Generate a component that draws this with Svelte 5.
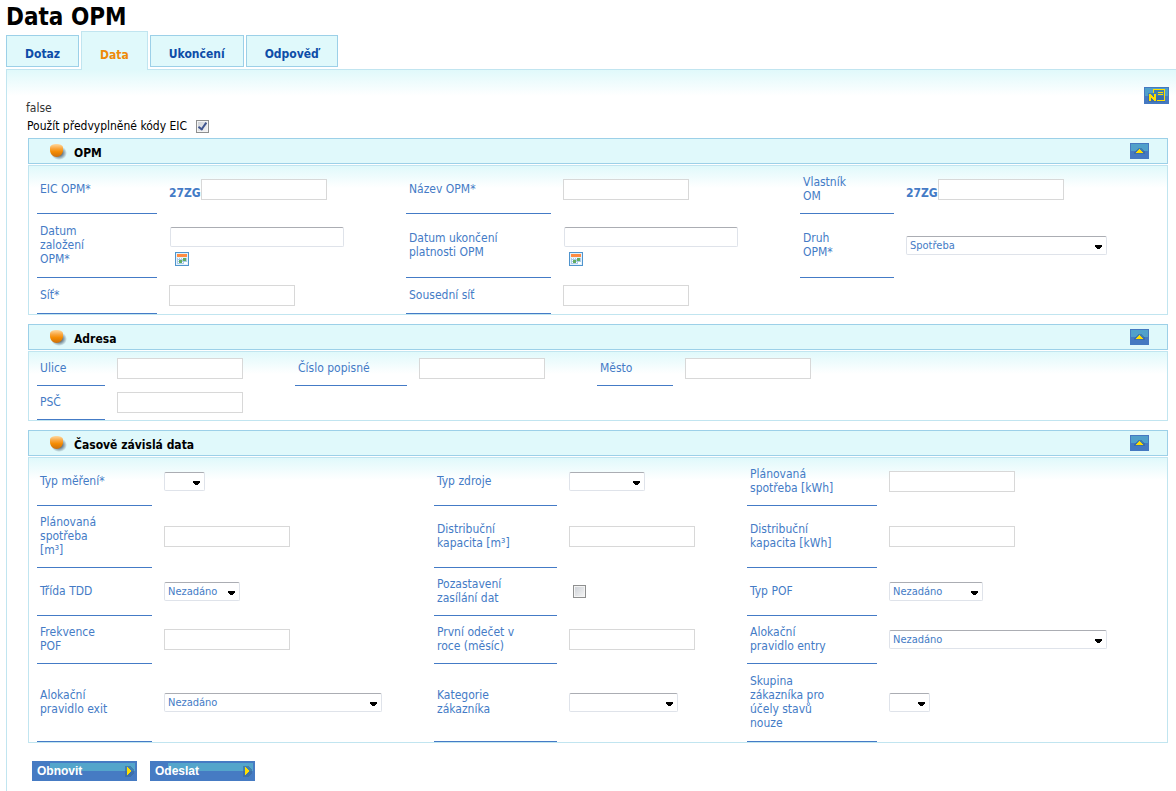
<script lang="ts">
	type Field = {
		id: string;
		label: string;
		type: 'text' | 'date' | 'select' | 'checkbox';
		prefix?: string;
		value?: string;
		size?: string;
	};

	type Section = {
		id: string;
		title: string;
		open: boolean;
		fields: Field[];
	};

	const tabs = ['Dotaz', 'Data', 'Ukončení', 'Odpověď'];
	let activeTab = $state('Data');
	let prefillEic = $state(true);

	let sections = $state<Section[]>([
		{
			id: 'opm',
			title: 'OPM',
			open: true,
			fields: [
				{ id: 'eic', label: 'EIC OPM*', type: 'text', prefix: '27ZG' },
				{ id: 'nazev', label: 'Název OPM*', type: 'text' },
				{ id: 'vlastnik', label: 'Vlastník\nOM', type: 'text', prefix: '27ZG' },
				{ id: 'zalozeni', label: 'Datum\nzaložení\nOPM*', type: 'date' },
				{ id: 'ukonceni', label: 'Datum ukončení\nplatnosti OPM', type: 'date' },
				{ id: 'druh', label: 'Druh\nOPM*', type: 'select', value: 'Spotřeba', size: 'lg' },
				{ id: 'sit', label: 'Síť*', type: 'text' },
				{ id: 'sousedni', label: 'Sousední síť', type: 'text' }
			]
		},
		{
			id: 'adresa',
			title: 'Adresa',
			open: true,
			fields: [
				{ id: 'ulice', label: 'Ulice', type: 'text' },
				{ id: 'cislo', label: 'Číslo popisné', type: 'text' },
				{ id: 'mesto', label: 'Město', type: 'text' },
				{ id: 'psc', label: 'PSČ', type: 'text' }
			]
		},
		{
			id: 'casova',
			title: 'Časově závislá data',
			open: true,
			fields: [
				{ id: 'mereni', label: 'Typ měření*', type: 'select', value: '', size: 'xs' },
				{ id: 'zdroj', label: 'Typ zdroje', type: 'select', value: '', size: 'sm' },
				{ id: 'spotreba-kwh', label: 'Plánovaná\nspotřeba [kWh]', type: 'text' },
				{ id: 'spotreba-m3', label: 'Plánovaná\nspotřeba\n[m³]', type: 'text' },
				{ id: 'kapacita-m3', label: 'Distribuční\nkapacita [m³]', type: 'text' },
				{ id: 'kapacita-kwh', label: 'Distribuční\nkapacita [kWh]', type: 'text' },
				{ id: 'tdd', label: 'Třída TDD', type: 'select', value: 'Nezadáno', size: 'sm' },
				{ id: 'pozastaveni', label: 'Pozastavení\nzasílání dat', type: 'checkbox' },
				{ id: 'pof', label: 'Typ POF', type: 'select', value: 'Nezadáno', size: 'md' },
				{ id: 'frekvence', label: 'Frekvence\nPOF', type: 'text' },
				{ id: 'odecet', label: 'První odečet v\nroce (měsíc)', type: 'text' },
				{ id: 'entry', label: 'Alokační\npravidlo entry', type: 'select', value: 'Nezadáno', size: 'xl' },
				{ id: 'exit', label: 'Alokační\npravidlo exit', type: 'select', value: 'Nezadáno', size: 'xl' },
				{ id: 'kategorie', label: 'Kategorie\nzákazníka', type: 'select', value: '', size: 'ml' },
				{ id: 'skupina', label: 'Skupina\nzákazníka pro\núčely stavů\nnouze', type: 'select', value: '', size: 'xs' }
			]
		}
	]);
</script>

<div class="page">
	<h1>Data OPM</h1>

	<div class="tabs" role="tablist">
		{#each tabs as tab}
			<button
				type="button"
				class="tab"
				class:active={tab === activeTab}
				role="tab"
				aria-selected={tab === activeTab}
				onclick={() => (activeTab = tab)}>{tab}</button
			>
		{/each}
	</div>

	<form class="panel" onsubmit={(e) => e.preventDefault()}>
		<div class="toolbar">
			<button class="note-btn" type="button" aria-label="Poznámka">
				<svg width="25" height="17" viewBox="0 0 25 17" shape-rendering="crispEdges">
					<rect width="25" height="17" fill="#4579c1" />
					<rect x="1" y="1" width="23" height="8" fill="#50a0ca" />
					<path d="M4 6h9v9H4zM9 2h12v13H9z" fill="#37679b" opacity=".6" />
					<path d="M9 2h12v12h-8v-1h7V3H10v3H9z" fill="#ffde00" />
					<path d="M14 5h5v1h-5zM14 7h5v1h-5z" fill="#ffde00" />
					<path d="M5 7h2v1h1v1h1v1h1V7h2v7h-2v-1H9v-1H8v-1H7v3H5z" fill="#ffde00" />
				</svg>
			</button>
		</div>

		<div class="intro">
			<span class="flag">false</span>
			<div class="prefill">
				<label for="prefill">Použít předvyplněné kódy EIC</label>
				<input id="prefill" type="checkbox" bind:checked={prefillEic} />
			</div>
		</div>

		{#each sections as section (section.id)}
			<section>
				<header>
					<svg class="ball" width="19" height="17" viewBox="0 0 19 17">
						<defs>
							<linearGradient id="ball-{section.id}" x2="0" y2="1">
								<stop offset="0" stop-color="#ffd9a0" />
								<stop offset=".35" stop-color="#f9a53c" />
								<stop offset=".6" stop-color="#f58b00" />
								<stop offset="1" stop-color="#c97010" />
							</linearGradient>
							<radialGradient id="shade-{section.id}">
								<stop offset=".4" stop-color="#456" stop-opacity=".8" />
								<stop offset="1" stop-color="#456" stop-opacity="0" />
							</radialGradient>
						</defs>
						<ellipse cx="10" cy="10" rx="8" ry="7" fill="url(#shade-{section.id})" />
						<path
							d="M1 5c0-3 3-4 6.500-4S14 2 14 5v2c0 4-3 7-6.500 7S1 11 1 7z"
							fill="url(#ball-{section.id})"
						/>
					</svg>
					<h2>{section.title}</h2>
					<button
						class="collapse"
						type="button"
						aria-label="Sbalit {section.title}"
						aria-expanded={section.open}
						onclick={() => (section.open = !section.open)}
					>
						<svg width="19" height="16" viewBox="0 0 19 16" shape-rendering="crispEdges">
							<rect width="19" height="16" fill="#4579c1" />
							<rect x="1" y="1" width="17" height="7" fill="#50a0ca" />
							<path d="M4 11V9l4-4h3l4 4v2z" fill="#37679b" opacity=".6" />
							<path d="M9 6h1v1h1v1h1v1h1v1H6V9h1V8h1V7h1z" fill="#ffde00" />
						</svg>
					</button>
				</header>
				{#if section.open}
					<div class="fields {section.id}">
						{#each section.fields as field (field.id)}
							<label class="name" for={field.id}>{field.label}</label>
							<div class="control" class:date={field.type === 'date'}>
								{#if field.prefix}
									<span class="prefix">{field.prefix}</span>
								{/if}
								{#if field.type === 'select'}
									<select id={field.id} class={field.size} value={field.value}>
										<option value={field.value}>{field.value}</option>
									</select>
								{:else if field.type === 'checkbox'}
									<input id={field.id} class="lone" type="checkbox" />
								{:else}
									<input id={field.id} type="text" />
								{/if}
								{#if field.type === 'date'}
									<button class="calendar" type="button" aria-label="Vybrat datum">
										<svg width="14" height="14" viewBox="0 0 14 14" shape-rendering="crispEdges">
											<rect x=".5" y=".5" width="13" height="13" fill="#e4f1fa" stroke="#4f94cd" />
											<rect x="2" y="2" width="10" height="3" fill="#ff8c42" />
											<path d="M2 6h10v6H2z" fill="#a9cce8" />
											<path
												d="M3 6h1v1H3zM5 6h1v1H5zM7 6h1v1H7zM9 6h1v1H9zM3 8h1v1H3zM5 8h1v1H5zM3 10h1v1H3zM7 10h1v1H7zM9 10h3v2H9z"
												fill="#fff"
											/>
											<path d="M4 8h3v3H4zM8 6h3v3H8z" fill="#62ab62" />
										</svg>
									</button>
								{/if}
							</div>
						{/each}
					</div>
				{/if}
			</section>
		{/each}

		<div class="actions">
			{#each ['Obnovit', 'Odeslat'] as action}
				<button class="action" type="button">
					{action}
					<svg width="15" height="16" viewBox="0 0 15 16" shape-rendering="crispEdges">
						<path d="M3 3h5l4 4v3l-4 4H3z" fill="#37679b" opacity=".6" />
						<path d="M5 4h1v1h1v1h1v1h1v2H8v1H7v1H6v1H5z" fill="#ffde00" />
					</svg>
				</button>
			{/each}
		</div>
	</form>
</div>

<style>
	:global(body) {
		margin: 0;
		background: #fff;
	}

	.page {
		--blue: #447bc6;
		--pale: #e0f9fb;
		--edge: #9cd0e8;
		--edge-soft: #c1e5f0;
		display: flex;
		flex-direction: column;
		box-sizing: border-box;
		min-height: 100vh;
		padding: 4px 0 0 6px;
		font-family: Tahoma, 'DejaVu Sans Condensed', 'DejaVu Sans', sans-serif;
		font-size: 12px;
		line-height: 14px;
		color: #000;
	}

	button,
	input,
	select {
		box-sizing: border-box;
		margin: 0;
		font-family: inherit;
	}

	button {
		padding: 0;
		border: none;
		background: none;
		cursor: pointer;
	}

	svg {
		display: block;
	}

	h1 {
		margin: 0;
		font-size: 24px;
		line-height: 27px;
	}

	.tabs {
		display: flex;
		align-items: flex-end;
		gap: 2px;
	}

	.tab {
		height: 32px;
		margin-bottom: 2px;
		padding: 6px 18px 0;
		border: 1px solid var(--edge);
		background: var(--pale);
		color: #0d4da8;
		font-size: 12px;
		font-weight: bold;
	}
	.tab.active {
		z-index: 1;
		height: 39px;
		margin-bottom: -1px;
		padding-top: 8px;
		border-color: var(--edge-soft);
		border-bottom: none;
		color: #ee8a08;
	}

	.panel {
		flex: 1;
		padding: 17px 7px 10px 19px;
		border-top: 1px solid var(--edge-soft);
		border-left: 1px solid var(--edge-soft);
		background: linear-gradient(var(--pale), #fff 26px);
	}

	.toolbar {
		display: flex;
		justify-content: flex-end;
		height: 14px;
	}

	.intro {
		display: flex;
		flex-direction: column;
		gap: 4px;
		margin-bottom: 5px;
	}

	.flag {
		color: #333;
	}

	.prefill {
		display: flex;
		align-items: center;
		gap: 9px;
		padding-left: 1px;
	}

	section {
		margin: 0 1px 9px 2px;
	}

	header {
		display: flex;
		align-items: center;
		box-sizing: border-box;
		height: 26px;
		margin-bottom: 1px;
		padding: 0 18px 0 20px;
		border: 1px solid var(--edge);
		background: var(--pale);
	}

	h2 {
		flex: 1;
		margin: 0 0 0 6px;
		padding-top: 4px;
		font-size: 12px;
		line-height: 14px;
	}

	.fields {
		display: grid;
		column-gap: 12px;
		padding: 0 8px;
		border: 1px solid var(--edge-soft);
		background: linear-gradient(var(--pale), #fff 22px);
	}
	.fields.opm {
		grid-template-columns: 120px 225fr 145px 225fr 94px 253fr;
		grid-template-rows: 48px 64px 36px;
	}
	.fields.adresa {
		grid-template-columns: 68px 166fr 112px 166fr 76px 474fr;
		grid-auto-rows: 34px;
	}
	.fields.casova {
		grid-template-columns: 115px 258fr 123px 166fr 130px 270fr;
		grid-template-rows: 48px 62px 48px 48px 78px;
	}

	.name {
		display: flex;
		align-items: center;
		padding: 0 3px 2px;
		border-bottom: 1px solid var(--blue);
		color: var(--blue);
		white-space: pre-line;
	}

	.control {
		display: flex;
		align-items: flex-end;
		align-self: center;
		padding-bottom: 2px;
	}
	.control.date {
		flex-direction: column;
		align-items: flex-start;
		gap: 5px;
		padding: 0 0 0 1px;
	}

	.prefix {
		color: var(--blue);
		font-weight: bold;
	}

	input[type='text'] {
		width: 126px;
		height: 21px;
		padding: 0 3px;
		border: 1px solid #d8d8d8;
		background: #fff;
		color: var(--blue);
		font-size: 11px;
	}

	.date input[type='text'] {
		width: 174px;
		height: 20px;
	}

	.date input[type='text'],
	select {
		border: 1px solid #dfe3ea;
		border-top-color: #abadb3;
		border-radius: 2px;
	}

	.calendar {
		margin-left: 5px;
	}

	select {
		height: 19px;
		padding: 0 14px 0 3px;
		appearance: none;
		background-color: #fff;
		background-image:
			linear-gradient(#000, #000), linear-gradient(#000, #000), linear-gradient(#000, #000);
		background-position:
			right 4px top 8px,
			right 5px top 9px,
			right 6px top 10px;
		background-repeat: no-repeat;
		background-size:
			7px 2px,
			5px 2px,
			3px 2px;
		color: var(--blue);
		font-size: 11px;
	}
	.xs {
		width: 41px;
	}
	.sm {
		width: 76px;
	}
	.md {
		width: 94px;
	}
	.ml {
		width: 109px;
	}
	.lg {
		width: 201px;
	}
	.xl {
		width: 218px;
	}

	input[type='checkbox'] {
		display: grid;
		place-items: center;
		width: 13px;
		height: 13px;
		border: 1px solid #8e8f8f;
		appearance: none;
		background: linear-gradient(135deg, #cbcfd5, #f6f6f6);
		box-shadow: inset 0 0 0 1px #f4f4f4;
	}
	input[type='checkbox']:checked::after {
		content: '';
		box-sizing: border-box;
		width: 5px;
		height: 9px;
		margin-bottom: 2px;
		border: solid #40568f;
		border-width: 0 2px 2px 0;
		transform: rotate(35deg);
	}

	.lone {
		margin-left: 4px;
	}

	.actions {
		display: flex;
		gap: 13px;
		padding: 9px 0 0 6px;
	}

	.action {
		display: flex;
		align-items: center;
		justify-content: space-between;
		width: 105px;
		height: 20px;
		padding-left: 5px;
		background: linear-gradient(#54a5cb, #54a5cb) 18px 2px / 85px 8px no-repeat #467bc3;
		color: #fff;
		font-family: Arial, 'Liberation Sans', sans-serif;
		font-size: 12px;
		font-weight: bold;
	}
</style>
